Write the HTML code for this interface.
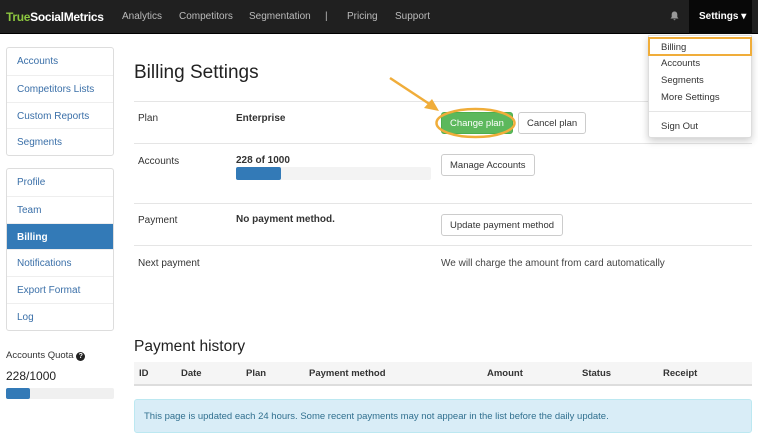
<!DOCTYPE html>
<html><head><style>
*{box-sizing:border-box;margin:0;padding:0}
body{width:758px;height:436px;overflow:hidden;background:#fff;font-family:"Liberation Sans",Arial,sans-serif;font-size:10px;color:#333;position:relative}
.nav{position:absolute;left:0;top:0;width:758px;height:34px;background:#202020;border-bottom:1px solid #000}
.nav span{position:absolute;top:11px;color:#bbb;font-size:10px}
.a{position:absolute}
.sb{position:absolute;left:6px;width:108px;border:1px solid #ddd;border-radius:3px}
.sb div{height:26.8px;line-height:28px;padding-left:10px;color:#3a6fa8;border-top:1px solid #eee;font-size:10px}
.sb div:first-child{border-top:none}
.sb .act{background:#337ab7;color:#fff;font-weight:bold}
.hr{position:absolute;left:134px;width:618px;height:1px;background:#e5e5e5}
.btn{position:absolute;height:22px;border:1px solid #ccc;border-radius:3px;background:#fff;line-height:21px;padding:0 8px;font-size:9.5px;color:#333}
.dd{position:absolute;z-index:5;left:648px;top:35px;width:104px;height:103px;background:#fff;border:1px solid #ddd;box-shadow:0 3px 8px rgba(0,0,0,.2);border-radius:0 0 3px 3px}
.dd span{position:absolute;left:12px;font-size:9.5px;color:#333}
</style></head><body>
<div class="nav">
<span style="left:6px;top:10px;font-size:12px;font-weight:bold;color:#fff;letter-spacing:-0.3px"><b style="color:#8cc63f">True</b>SocialMetrics</span>
<span style="left:122px">Analytics</span>
<span style="left:179px">Competitors</span>
<span style="left:249px">Segmentation</span>
<span style="left:325px">|</span>
<span style="left:347px">Pricing</span>
<span style="left:395px">Support</span>
<svg class="a" style="left:670px;top:11px" width="9" height="10" viewBox="0 0 9 10"><path d="M4.5 0.5c-1.8 0-2.8 1.3-2.8 3v2.5L0.5 7.5h8L7.3 6V3.5c0-1.7-1-3-2.8-3zM3.5 8.3h2a1 1 0 0 1-2 0z" fill="#999"/></svg>
<div class="a" style="left:689px;top:0;width:63px;height:34px;background:#080808"></div>
<span style="left:699px;color:#fff;font-weight:bold">Settings ▾</span>
</div>
<div class="dd">
<div class="a" style="left:-1px;top:1px;width:104px;height:19px;border:2px solid #f0ad3a"></div>
<span style="top:6px">Billing</span>
<span style="top:22px">Accounts</span>
<span style="top:39px">Segments</span>
<span style="top:56px">More Settings</span>
<div class="a" style="left:0;top:75px;width:102px;height:1px;background:#e5e5e5"></div>
<span style="top:85px">Sign Out</span>
</div>
<div class="sb" style="top:47px"><div>Accounts</div><div>Competitors Lists</div><div>Custom Reports</div><div>Segments</div></div>
<div class="sb" style="top:168px"><div>Profile</div><div>Team</div><div class="act">Billing</div><div>Notifications</div><div>Export Format</div><div>Log</div></div>
<div class="a" style="left:6px;top:350px;font-size:9.5px">Accounts Quota <span style="display:inline-block;width:9px;height:9px;border-radius:50%;background:#222;color:#fff;font-size:7px;text-align:center;line-height:9px;font-weight:bold">?</span></div>
<div class="a" style="left:6px;top:369px;font-size:12px;color:#222">228/1000</div>
<div class="a" style="left:6px;top:388px;width:108px;height:11px;background:#f0f0f0;border-radius:2px"><div style="width:24px;height:11px;background:#337ab7;border-radius:2px"></div></div>

<div class="a" style="left:134px;top:62px;font-size:19px;color:#222">Billing Settings</div>
<div class="hr" style="top:101px"></div>
<div class="hr" style="top:143px"></div>
<div class="hr" style="top:203px"></div>
<div class="hr" style="top:245px"></div>
<div class="a" style="left:138px;top:113px">Plan</div>
<div class="a" style="left:236px;top:113px;font-weight:bold">Enterprise</div>
<div class="btn" style="left:441px;top:112px;background:#5cb85c;border-color:#4cae4c;color:#fff">Change plan</div>
<svg class="a" style="left:380px;top:70px;overflow:visible" width="140" height="70">
<ellipse cx="95.5" cy="53" rx="39" ry="14" fill="none" stroke="#f0ad3a" stroke-width="2.5"/>
<path d="M10 8 L54 37" stroke="#f0ad3a" stroke-width="2.5"/>
<path d="M59 41 L44 38 L52 29 Z" fill="#f0ad3a"/>
</svg>
<div class="btn" style="left:518px;top:112px">Cancel plan</div>
<div class="a" style="left:138px;top:156px">Accounts</div>
<div class="a" style="left:236px;top:155px;font-weight:bold">228 of 1000</div>
<div class="a" style="left:236px;top:167px;width:195px;height:13px;background:#f3f3f3;border-radius:2px"><div style="width:45px;height:13px;background:#337ab7;border-radius:2px"></div></div>
<div class="btn" style="left:441px;top:154px">Manage Accounts</div>
<div class="a" style="left:138px;top:215px">Payment</div>
<div class="a" style="left:236px;top:214px;font-weight:bold">No payment method.</div>
<div class="btn" style="left:441px;top:214px">Update payment method</div>
<div class="a" style="left:138px;top:258px">Next payment</div>
<div class="a" style="left:441px;top:258px;color:#444">We will charge the amount from card automatically</div>

<div class="a" style="left:134px;top:338px;font-size:15.5px;color:#222">Payment history</div>
<div class="a" style="left:134px;top:362px;width:618px;height:24px;background:#f5f5f5;border-bottom:2px solid #ddd;font-weight:bold;font-size:9.5px">
<span class="a" style="left:5px;top:6px">ID</span><span class="a" style="left:47px;top:6px">Date</span><span class="a" style="left:112px;top:6px">Plan</span><span class="a" style="left:175px;top:6px">Payment method</span><span class="a" style="left:353px;top:6px">Amount</span><span class="a" style="left:448px;top:6px">Status</span><span class="a" style="left:529px;top:6px">Receipt</span>
</div>
<div class="a" style="left:134px;top:399px;width:618px;height:34px;background:#d9edf7;border:1px solid #bce8f1;border-radius:3px;color:#31708f;font-size:9.5px;padding:11px 9px">This page is updated each 24 hours. Some recent payments may not appear in the list before the daily update.</div>
</body></html>
